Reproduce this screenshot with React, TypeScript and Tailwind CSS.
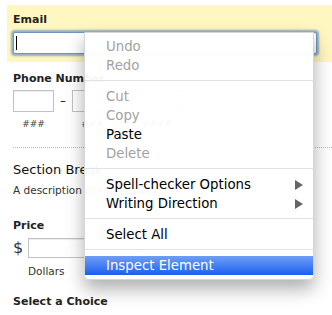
import React from 'react';

type Item = { label: string; disabled?: boolean; submenu?: boolean; active?: boolean };

const groups: Item[][] = [
  [{ label: 'Undo', disabled: true }, { label: 'Redo', disabled: true }],
  [
    { label: 'Cut', disabled: true },
    { label: 'Copy', disabled: true },
    { label: 'Paste' },
    { label: 'Delete', disabled: true },
  ],
  [
    { label: 'Spell-checker Options', submenu: true },
    { label: 'Writing Direction', submenu: true },
  ],
  [{ label: 'Select All' }],
  [{ label: 'Inspect Element', active: true }],
];

function ContextMenu() {
  return (
    <div className="absolute left-[84px] top-[32px] w-[230px] bg-white/[0.96] border border-[#d6d6d6] rounded-b-[5px] py-[4px] shadow-[0_9px_18px_rgba(0,0,0,0.32)]">
      {groups.map((group, gi) => (
        <div key={gi}>
          {gi > 0 && <div className="h-px bg-[#e2e2e2] my-[5px] mb-[6px]" />}
          {group.map((item) => (
            <div
              key={item.label}
              className={
                'h-[19px] flex items-center justify-between pl-[21px] pr-[10px] text-[13.3px] leading-[19px] ' +
                (item.active
                  ? 'bg-gradient-to-b from-[#6e9ef6] to-[#1a5df0] text-white'
                  : item.disabled
                    ? 'text-[#a2a2a2]'
                    : 'text-black')
              }
            >
              <span>{item.label}</span>
              {item.submenu && (
                <svg width="8" height="10" viewBox="0 0 8 10">
                  <path d="M0 0 L8 5 L0 10 Z" fill="#666" />
                </svg>
              )}
            </div>
          ))}
        </div>
      ))}
    </div>
  );
}

export default function App() {
  return (
    <div
      className="relative w-[332px] h-[315px] overflow-hidden bg-white text-[#222]"
      style={{ fontFamily: '"DejaVu Sans", sans-serif' }}
    >
      <div className="pt-[5px]">
        <div className="ml-[7px] bg-[#fff6c0] pl-[6px] pr-[15px] pt-[8px] pb-[8px]">
          <div className="text-[11px] font-bold leading-[13px]">Email</div>
          <div className="mt-[6px] h-[22px] border border-[#6f95c0] rounded-[2px] bg-white shadow-[0_0_2px_2px_rgba(110,150,200,0.75)] flex items-center pl-[2px]">
            <div className="w-px h-[14px] bg-black" />
          </div>
        </div>

        <div className="pl-[13px]">
          <div className="mt-[10px] text-[11px] font-bold leading-[13px]">Phone Number</div>
          <div className="mt-[5px] flex items-center">
            <div className="w-[41px] h-[22px] border border-[#c2c2c2] bg-white shadow-[inset_0_1px_1px_rgba(0,0,0,0.08)]" />
            <span className="mx-[6px] text-[12px]">–</span>
            <div className="w-[41px] h-[22px] border border-[#c2c2c2] bg-white" />
            <span className="mx-[6px] text-[12px]">–</span>
            <div className="w-[52px] h-[22px] border border-[#c2c2c2] bg-white" />
          </div>
          <div className="mt-[7px] flex text-[9px] leading-[10px] text-[#444] italic">
            <span className="w-[41px] text-center">###</span>
            <span className="w-[18px]" />
            <span className="w-[41px] text-center">###</span>
            <span className="w-[18px]" />
            <span className="w-[52px] text-center">####</span>
          </div>
        </div>

        <div className="ml-[13px] mt-[18px] border-t border-dotted border-[#b8b8b8]" />

        <div className="pl-[13px]">
          <div className="mt-[13px] text-[13px] leading-[17px] text-[#111]">Section Break</div>
          <div className="mt-[6px] text-[10.5px] leading-[12px] text-[#333]">A description of the section</div>

          <div className="mt-[23px] text-[11px] font-bold leading-[13px]">Price</div>
          <div className="mt-[6px] flex items-center">
            <span className="w-[15px] text-[16px] leading-[20px] text-[#333]">$</span>
            <div className="w-[110px] h-[20px] border border-[#c2c2c2] bg-white shadow-[inset_0_1px_1px_rgba(0,0,0,0.08)]" />
          </div>
          <div className="mt-[7px] pl-[15px] text-[10.5px] leading-[12px] text-[#333]">Dollars</div>

          <div className="mt-[18px] text-[11px] font-bold leading-[13px]">Select a Choice</div>
        </div>
      </div>

      <ContextMenu />
    </div>
  );
}
